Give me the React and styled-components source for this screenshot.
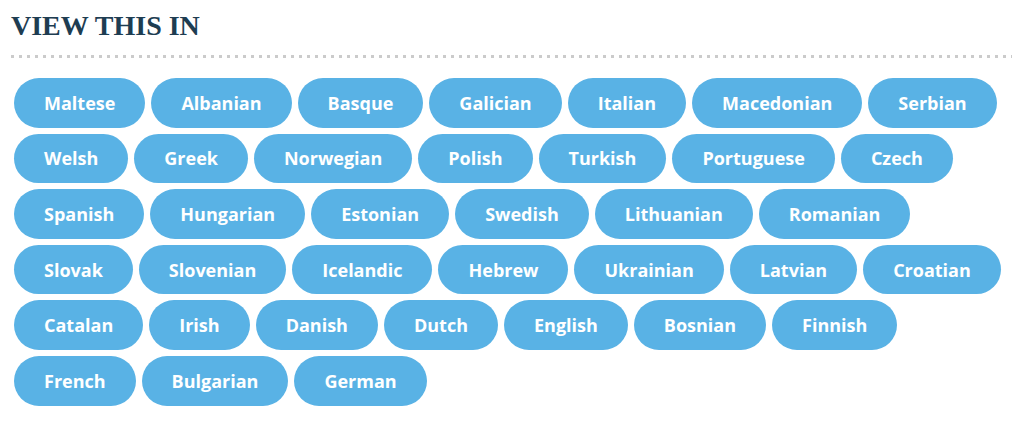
import React from "react"
import styled, { createGlobalStyle } from "styled-components"

const GlobalStyle = createGlobalStyle`
  body {
    margin: 0;
    background: #fff;
  }
`

const Wrapper = styled.section`
  width: 1012px;
  padding: 0 0 0 11px;
  box-sizing: border-box;
`

const Heading = styled.h2`
  margin: 0;
  padding-top: 10px;
  font-family: "Liberation Serif", "Times New Roman", serif;
  font-weight: bold;
  font-size: 28px;
  line-height: 32px;
  color: #1e3d52;
  text-transform: uppercase;
`

const Dots = styled.div`
  height: 3px;
  margin-top: 13px;
  background-image: linear-gradient(to right, #cbcbcb 3px, transparent 3px);
  background-size: 8px 3px;
  background-repeat: repeat-x;
`

const List = styled.ul`
  list-style: none;
  margin: 20px 0 0 3px;
  padding: 0;
  width: 990px;
  display: flex;
  flex-wrap: wrap;
  gap: 6px;
`

const Pill = styled.li`
  height: 49.6px;
  padding: 0 30px;
  display: flex;
  align-items: center;
  border-radius: 25px;
  background: #59b2e5;
  color: #fff;
  font-family: "Open Sans", sans-serif;
  font-weight: bold;
  font-size: 18px;
`

const languages = [
  "Maltese", "Albanian", "Basque", "Galician", "Italian", "Macedonian", "Serbian",
  "Welsh", "Greek", "Norwegian", "Polish", "Turkish", "Portuguese", "Czech",
  "Spanish", "Hungarian", "Estonian", "Swedish", "Lithuanian", "Romanian",
  "Slovak", "Slovenian", "Icelandic", "Hebrew", "Ukrainian", "Latvian", "Croatian",
  "Catalan", "Irish", "Danish", "Dutch", "English", "Bosnian", "Finnish",
  "French", "Bulgarian", "German",
]

export default function App() {
  return (
    <Wrapper>
      <GlobalStyle />
      <Heading>View this in</Heading>
      <Dots />
      <List>
        {languages.map((lang) => (
          <Pill key={lang}>{lang}</Pill>
        ))}
      </List>
    </Wrapper>
  )
}
